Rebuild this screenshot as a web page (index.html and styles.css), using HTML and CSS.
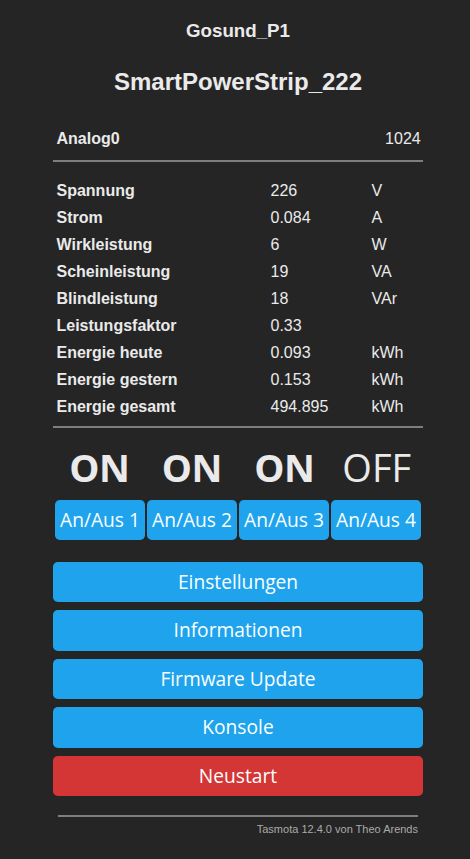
FILE: index.html
```html
<!DOCTYPE html>
<html lang="de">
<head>
<meta charset="utf-8">
<title>Gosund_P1 - Hauptmenü</title>
<link rel="stylesheet" href="styles.css">
</head>
<body>
<div class="page">
  <h3 class="module">Gosund_P1</h3>
  <h2 class="device">SmartPowerStrip_222</h2>

  <div class="analog">
    <div class="lbl">Analog0</div>
    <div class="num">1024</div>
  </div>
  <hr class="rule rule-a">

  <div class="sensors">
    <div class="lbl">Spannung</div><div class="val">226</div><div class="unit">V</div>
    <div class="lbl">Strom</div><div class="val">0.084</div><div class="unit">A</div>
    <div class="lbl">Wirkleistung</div><div class="val">6</div><div class="unit">W</div>
    <div class="lbl">Scheinleistung</div><div class="val">19</div><div class="unit">VA</div>
    <div class="lbl">Blindleistung</div><div class="val">18</div><div class="unit">VAr</div>
    <div class="lbl">Leistungsfaktor</div><div class="val">0.33</div><div class="unit"></div>
    <div class="lbl">Energie heute</div><div class="val">0.093</div><div class="unit">kWh</div>
    <div class="lbl">Energie gestern</div><div class="val">0.153</div><div class="unit">kWh</div>
    <div class="lbl">Energie gesamt</div><div class="val">494.895</div><div class="unit">kWh</div>
  </div>
  <hr class="rule rule-b">

  <div class="states">
    <div class="state on">ON</div>
    <div class="state on">ON</div>
    <div class="state on">ON</div>
    <div class="state off">OFF</div>
  </div>

  <div class="toggles">
    <button class="btn">An/Aus 1</button>
    <button class="btn">An/Aus 2</button>
    <button class="btn">An/Aus 3</button>
    <button class="btn">An/Aus 4</button>
  </div>

  <div class="menu">
    <button class="btn">Einstellungen</button>
    <button class="btn">Informationen</button>
    <button class="btn">Firmware Update</button>
    <button class="btn">Konsole</button>
    <button class="btn btn-red">Neustart</button>
  </div>

  <div class="footer">
    <hr class="rule rule-f">
    <a class="credit" href="#">Tasmota 12.4.0 von Theo Arends</a>
  </div>
</div>
</body>
</html>
```

FILE: styles.css
```css
html, body {
  margin: 0;
  padding: 0;
  background: #252525;
}

body {
  font-family: "Liberation Sans", Arial, sans-serif;
  color: #eaeaea;
  height: 859px;
  overflow: hidden;
}

.page {
  width: 370px;
  margin: 0 0 0 53px;
  padding-top: 19.5px;
}

.module {
  margin: 0;
  font-size: 18.72px;
  line-height: 22px;
  font-weight: bold;
  text-align: center;
}

.device {
  margin: 26.2px 0 0;
  font-size: 24px;
  line-height: 28px;
  font-weight: bold;
  text-align: center;
}

.analog {
  margin-top: 29.3px;
  display: flex;
  justify-content: space-between;
  padding: 0 2.3px 0 3.5px;
  font-size: 16px;
  line-height: 27px;
}

.lbl {
  font-weight: bold;
}

.rule {
  border: 0;
  height: 2px;
  background: #7e7e7e;
  margin: 0;
}

.rule-a {
  margin-top: 8px;
}

.sensors {
  margin-top: 15px;
  display: grid;
  grid-template-columns: 214px 101px 1fr;
  padding-left: 3.5px;
  font-size: 16px;
  line-height: 27px;
}

.rule-b {
  margin-top: 6px;
}

.states {
  margin-top: 13px;
  display: grid;
  grid-template-columns: repeat(4, 1fr);
  font-family: "Open Sans", "Noto Sans", sans-serif;
  font-size: 38px;
  line-height: 52px;
  text-align: center;
  color: #eaeaea;
}

.state.on {
  font-weight: bold;
  letter-spacing: -0.5px;
}

.state.off {
  font-weight: normal;
}

.btn {
  display: block;
  border: 0;
  border-radius: 4.8px;
  background: #1fa3ec;
  color: #faffff;
  font-family: "Open Sans", "Noto Sans", sans-serif;
  font-size: 19.2px;
  line-height: 38.4px;
  padding: 1px 0;
  width: 100%;
  cursor: pointer;
  white-space: nowrap;
}

.btn-red {
  background: #d43535;
}

.toggles {
  margin-top: 7px;
  display: grid;
  grid-template-columns: repeat(4, 90px);
  column-gap: 2px;
  padding: 0 2px;
}

.menu {
  margin-top: 21.6px;
  display: flex;
  flex-direction: column;
  gap: 8.1px;
}

.footer {
  padding: 0 5px;
  text-align: right;
  font-size: 11px;
}

.rule-f {
  margin-top: 18.6px;
}

.credit {
  display: block;
  margin-top: 6px;
  line-height: 13px;
  color: #aaaaaa;
  text-decoration: none;
}
```
